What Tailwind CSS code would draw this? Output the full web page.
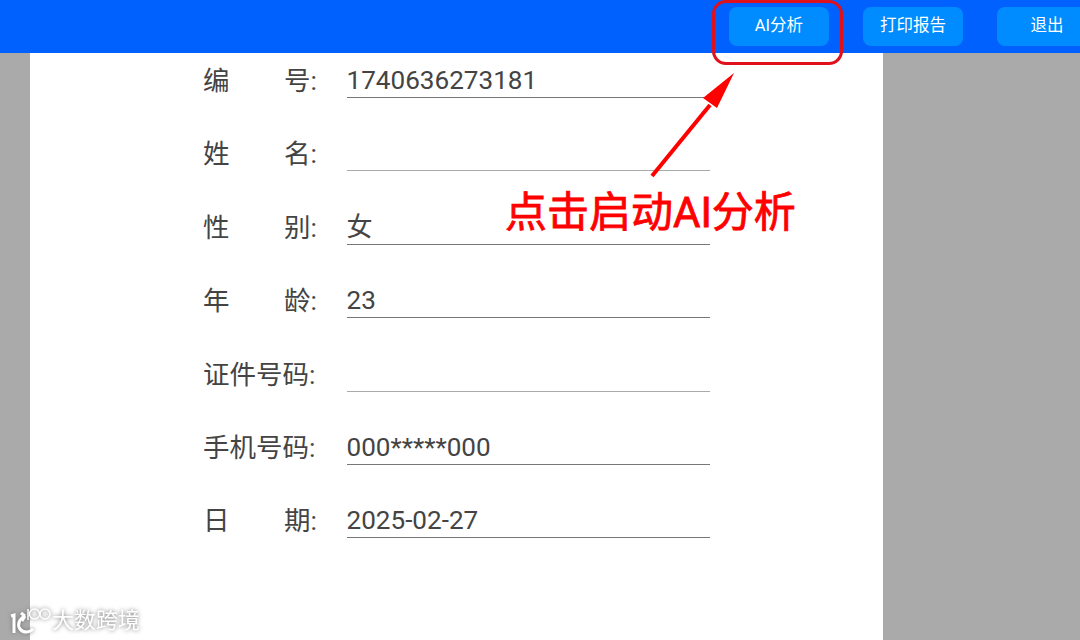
<!DOCTYPE html>
<html lang="zh-CN">
  <head>
    <meta charset="UTF-8" />
    <title>报告</title>
    <script src="https://cdn.jsdelivr.net/npm/@tailwindcss/browser@4"></script>
  </head>
  <body class="w-[1080px] h-[640px] overflow-hidden bg-[#aaaaaa] relative font-['Roboto','Noto_Sans_CJK_SC',sans-serif]">
    <!-- top bar -->
    <header class="h-[53px] bg-[#0061ff] flex items-center justify-end pb-[1px] gap-[34px] text-white text-[16.5px]">
      <button class="w-[100px] h-[39px] rounded-[8px] bg-[#008cff]">AI分析</button>
      <button class="w-[100px] h-[39px] rounded-[8px] bg-[#008cff]">打印报告</button>
      <button class="w-[83px] h-[39px] rounded-l-[8px] bg-[#008cff] pl-[17px]">退出</button>
    </header>

    <!-- report page -->
    <main class="ml-[30px] w-[853px] h-[587px] bg-white pl-[174px] text-[#444444]">
      <div class="flex flex-col gap-[33.4px] pt-[5px]">
        <div class="flex items-end h-[40px]">
          <div class="w-[114px] flex justify-between text-[26.5px] leading-[40px] translate-y-[3px] -translate-x-[1px]"><span>编</span><span>号:</span></div>
          <div class="ml-[29px] w-[363px] h-[40px] border-b border-[#777777] text-[26.1px] leading-[44px]"><span class="-ml-[0.5px]">1740636273181</span></div>
        </div>
        <div class="flex items-end h-[40px]">
          <div class="w-[114px] flex justify-between text-[26.5px] leading-[40px] translate-y-[3px] -translate-x-[1px]"><span>姓</span><span>名:</span></div>
          <div class="ml-[29px] w-[363px] h-[40px] border-b border-[#aaaaaa] text-[26.1px] leading-[44px]"></div>
        </div>
        <div class="flex items-end h-[40px]">
          <div class="w-[114px] flex justify-between text-[26.5px] leading-[40px] translate-y-[3px] -translate-x-[1px]"><span>性</span><span>别:</span></div>
          <div class="ml-[29px] w-[363px] h-[40px] border-b border-[#777777] text-[26.1px] leading-[44px]"><span class="-ml-[0.5px]">女</span></div>
        </div>
        <div class="flex items-end h-[40px]">
          <div class="w-[114px] flex justify-between text-[26.5px] leading-[40px] translate-y-[3px] -translate-x-[1px]"><span>年</span><span>龄:</span></div>
          <div class="ml-[29px] w-[363px] h-[40px] border-b border-[#777777] text-[26.1px] leading-[44px]"><span class="-ml-[0.5px]">23</span></div>
        </div>
        <div class="flex items-end h-[40px]">
          <div class="w-[114px] flex justify-between text-[26.5px] leading-[40px] translate-y-[3px] -translate-x-[1px] whitespace-nowrap"><span>证件号码:</span></div>
          <div class="ml-[29px] w-[363px] h-[40px] border-b border-[#aaaaaa] text-[26.1px] leading-[44px]"></div>
        </div>
        <div class="flex items-end h-[40px]">
          <div class="w-[114px] flex justify-between text-[26.5px] leading-[40px] translate-y-[3px] -translate-x-[1px] whitespace-nowrap"><span>手机号码:</span></div>
          <div class="ml-[29px] w-[363px] h-[40px] border-b border-[#777777] text-[26.1px] leading-[44px]"><span class="-ml-[0.5px]">000*****000</span></div>
        </div>
        <div class="flex items-end h-[40px]">
          <div class="w-[114px] flex justify-between text-[26.5px] leading-[40px] translate-y-[3px] -translate-x-[1px]"><span>日</span><span>期:</span></div>
          <div class="ml-[29px] w-[363px] h-[40px] border-b border-[#777777] text-[26.1px] leading-[44px]"><span class="-ml-[0.5px]">2025-02-27</span></div>
        </div>
      </div>
    </main>

    <!-- annotation over the screenshot -->
    <div class="absolute left-[712px] top-0 w-[131px] h-[65px] border-[3px] border-[#e0101c] rounded-[14px]"></div>
    <svg class="absolute left-0 top-0" width="1080" height="640" viewBox="0 0 1080 640">
      <path d="M652 176 L710 105" stroke="#ff0000" stroke-width="4" fill="none" />
      <path d="M734 73 L703 98 L717 108 Z" fill="#ff0000" />
    </svg>
    <div class="absolute left-[505px] top-[187px] text-[42px] leading-[52px] font-normal [-webkit-text-stroke:0.8px_#ff0000] text-[#ff0000] whitespace-nowrap">点击启动AI分析</div>

    <!-- watermark -->
    <div class="absolute left-[9px] top-[606px] flex items-center text-white drop-shadow-[0_0_2px_#777777]">
      <svg width="42" height="28" viewBox="0 0 42 28" fill="none" stroke="#ffffff">
        <path d="M2 9 L5 8 V26" stroke-width="3" />
        <path d="M16 9 C10 12 8 18 11 22 C14 26 20 26 24 22 M16 9 L12 6 M16 9 L13 14" stroke-width="3" />
        <path d="M19 2 V13" stroke-width="1.5" />
        <circle cx="25.5" cy="7" r="5" stroke-width="1.5" />
        <circle cx="36" cy="7" r="5" stroke-width="1.5" />
      </svg>
      <span class="ml-[1px] text-[22px] leading-[30px]">大数跨境</span>
    </div>
  </body>
</html>
